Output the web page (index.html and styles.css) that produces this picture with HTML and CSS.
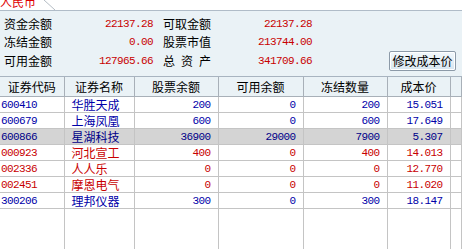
FILE: index.html
```html
<!DOCTYPE html>
<html lang="zh-CN">
<head>
    <meta charset="UTF-8">
    <title>资金股份</title>
    <link rel="stylesheet" href="styles.css">
</head>
<body>
    <div class="tabs">
        <span class="tab">人民币</span>
        <svg class="tab-edge" width="12" height="10" viewBox="0 0 12 10"><line x1="0" y1="0" x2="11" y2="10" stroke="#b4bcc4" stroke-width="1"/></svg>
    </div>

    <div class="summary">
        <span class="label">资金余额</span><span class="money">22137.28</span>
        <span class="label second">可取金额</span><span class="money">22137.28</span>
        <span></span>

        <span class="label">冻结金额</span><span class="money">0.00</span>
        <span class="label second">股票市值</span><span class="money">213744.00</span>
        <span></span>

        <span class="label">可用金额</span><span class="money">127965.66</span>
        <span class="label second spread">总资产</span><span class="money">341709.66</span>
        <button class="btn">修改成本价</button>
    </div>

    <table class="grid">
        <colgroup>
            <col style="width:64px"><col style="width:70px"><col style="width:84px"><col style="width:85px"><col style="width:84px"><col style="width:63px"><col>
        </colgroup>
        <thead>
            <tr><th>证券代码</th><th>证券名称</th><th>股票余额</th><th>可用余额</th><th>冻结数量</th><th>成本价</th><th></th></tr>
        </thead>
        <tbody>
            <tr class="blue"><td class="code">600410</td><td class="name">华胜天成</td><td>200</td><td>0</td><td>200</td><td>15.051</td><td></td></tr>
            <tr class="blue"><td class="code">600679</td><td class="name">上海凤凰</td><td>600</td><td>0</td><td>600</td><td>17.649</td><td></td></tr>
            <tr class="blue selected"><td class="code">600866</td><td class="name">星湖科技</td><td>36900</td><td>29000</td><td>7900</td><td>5.307</td><td></td></tr>
            <tr class="red"><td class="code">000923</td><td class="name">河北宣工</td><td>400</td><td>0</td><td>400</td><td>14.013</td><td></td></tr>
            <tr class="red"><td class="code">002336</td><td class="name">人人乐</td><td>0</td><td>0</td><td>0</td><td>12.770</td><td></td></tr>
            <tr class="red"><td class="code">002451</td><td class="name">摩恩电气</td><td>0</td><td>0</td><td>0</td><td>11.020</td><td></td></tr>
            <tr class="blue"><td class="code">300206</td><td class="name">理邦仪器</td><td>300</td><td>0</td><td>300</td><td>18.147</td><td></td></tr>
            <tr class="filler"><td></td><td></td><td></td><td></td><td></td><td></td><td></td></tr>
        </tbody>
    </table>
</body>
</html>
```

FILE: styles.css
```css
body {
    margin: 0;
    width: 462px;
    height: 251px;
    overflow: hidden;
    background: #ffffff;
    font-family: 'Noto Sans CJK SC', 'DejaVu Sans', sans-serif;
    font-size: 12px;
    color: #000;
}

/* Currency tab strip */
.tabs {
    height: 10px;
    overflow: hidden;
    display: flex;
    align-items: flex-start;
    border-bottom: 1px solid #b0bcc8;
    background: #ffffff;
}

.tab {
    width: 44px;
    color: #e00000;
    line-height: 12px;
    margin-top: -4px;
}

.tab-edge {
    display: block;
}

/* Fund summary */
.summary {
    display: grid;
    grid-template-columns: 48px 101px 58px 101px 1fr;
    grid-template-rows: 18px 18px 20px;
    align-items: center;
    height: 66px;
    padding: 4px 6px 0 4px;
    box-sizing: border-box;
    background: #eaf2f6;
    border-bottom: 1px solid #a8b4c0;
}

.label {
    line-height: 14px;
}

.label.second {
    padding-left: 10px;
}

.spread {
    text-align: justify;
    text-align-last: justify;
}

.money {
    text-align: right;
    color: #c80000;
    font-family: 'Liberation Mono', monospace;
    font-size: 11px;
    letter-spacing: -0.6px;
    line-height: 14px;
}

.btn {
    justify-self: end;
    width: 67px;
    height: 20px;
    padding: 0;
    font-family: inherit;
    font-size: 12px;
    line-height: 16px;
    color: #000;
    background: linear-gradient(#f2f8fc, #d8e6f0);
    border: 1px solid #8c9aa8;
    border-radius: 2px;
    box-shadow: inset 0 0 0 1px #ffffff;
}

/* Holdings table */
.grid {
    width: 462px;
    table-layout: fixed;
    border-collapse: collapse;
}

.grid th {
    height: 19px;
    padding: 0;
    font-weight: normal;
    background: #eaf2f6;
    border-right: 1px solid #a8b0b8;
    border-bottom: 1px solid #a8b0b8;
    text-align: center;
    line-height: 14px;
}

.grid td {
    height: 15px;
    padding: 0 7px 0 0;
    border-right: 1px solid #c4c4c4;
    border-bottom: 1px solid #c4c4c4;
    text-align: right;
    font-family: 'Liberation Mono', monospace;
    font-size: 11px;
    letter-spacing: -0.6px;
    line-height: 14px;
    white-space: nowrap;
    overflow: hidden;
}

.grid td.code {
    text-align: left;
    padding: 0 0 0 1px;
}

.grid td.name {
    text-align: left;
    padding: 0 0 0 7px;
    font-family: 'Noto Sans CJK SC', sans-serif;
    font-size: 12px;
    letter-spacing: 0;
}

.blue td {
    color: #0000a8;
}

.red td {
    color: #c80000;
}

.selected td {
    background: #d4d4d4;
    color: #000088;
}

.filler td {
    height: 40px;
    border-bottom: none;
}
```
